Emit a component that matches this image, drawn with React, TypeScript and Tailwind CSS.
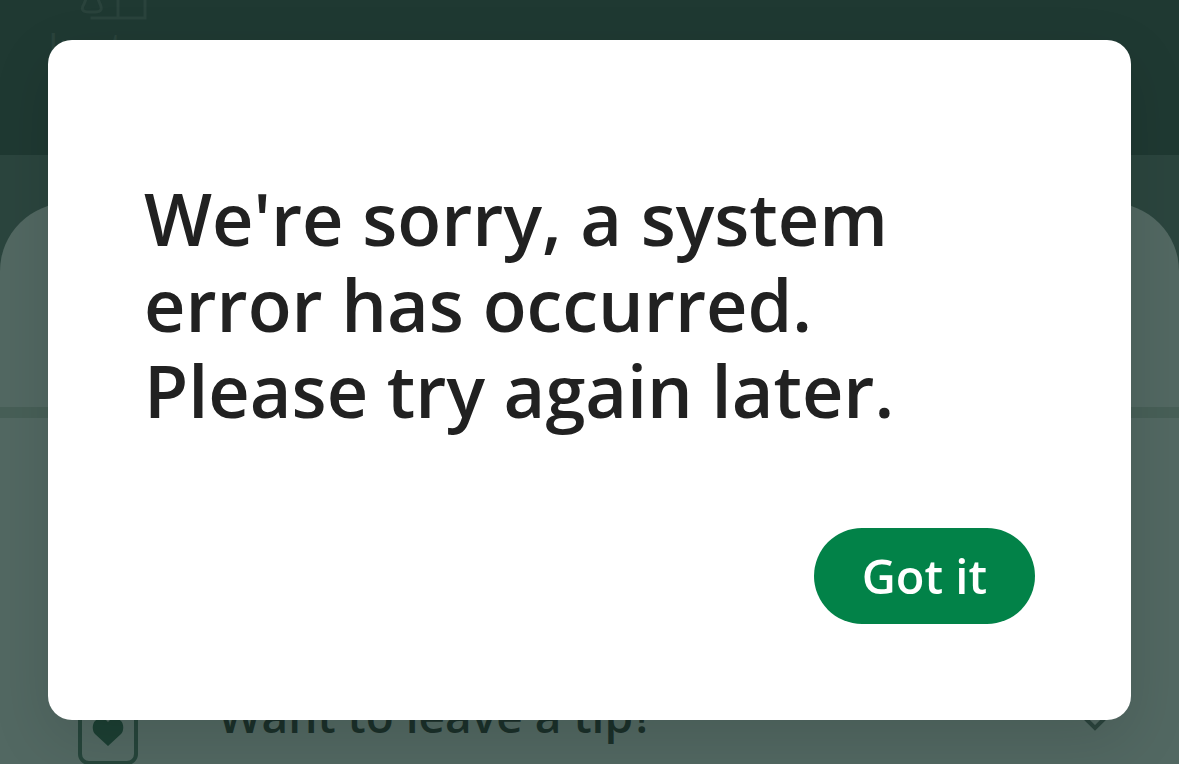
function StoreIcon() {
  return (
    <svg className="h-[60px] w-[68px]" viewBox="0 0 68 60" fill="none" stroke="currentColor" strokeWidth="3" strokeLinecap="square">
      <path d="M8 34 L4 44 Q-1 52 9 52 H15 Q24 52 20 44 L16 34 Z" />
      <path d="M12 58 H65 V12 M38 58 V12" />
    </svg>
  );
}

function TipIcon() {
  return (
    <svg className="h-[80px] w-[60px] shrink-0" viewBox="0 0 60 80" fill="none">
      <rect x="2" y="2" width="56" height="76" rx="9" stroke="#26453b" strokeWidth="4" />
      <path d="M30 61 L17 49 C14 46 14 39 17 36 C21 32 27 33 30 37 C33 33 39 32 43 36 C46 39 46 46 43 49 Z" fill="#1c3f33" />
    </svg>
  );
}

function OrderPage() {
  return (
    <div className="flex h-screen flex-col overflow-hidden bg-[#2b453e]">
      {/* Header with the order type */}
      <header className="h-[155px] shrink-0 overflow-hidden bg-[#1f3932] px-12 text-[#2a433c]">
        <div className="-mt-10 ml-8">
          <StoreIcon />
        </div>
        <p className="text-[38px] leading-[52px]">In store</p>
      </header>

      <main className="mt-12 flex-1 rounded-t-[68px] bg-[#526862]">
        <div className="box-content h-[204px] border-b-[11px] border-[#475f57]" />

        {/* Tip row */}
        <section className="flex items-center pt-[267px] pr-[72px] pl-[78px]">
          <TipIcon />
          <h2 className="ml-20 flex-1 pb-5 text-[46px] leading-[56px] font-semibold text-[#1b302a]">Want to leave a tip?</h2>
          <svg className="h-6 w-6 text-[#2b443d]" viewBox="0 0 24 24" fill="none" stroke="currentColor" strokeWidth="4">
            <path d="M2 5 L12 15 L22 5" />
          </svg>
        </section>
      </main>
    </div>
  );
}

function ErrorDialog() {
  return (
    <div className="fixed inset-0 px-12 pt-10">
      <div
        role="alertdialog"
        aria-modal="true"
        aria-labelledby="error-title"
        className="flex flex-col rounded-3xl bg-white px-24 pt-[135px] pb-24 shadow-[0_20px_60px_rgba(0,0,0,0.12)]"
      >
        <h1 id="error-title" className="max-w-[840px] text-[72px] leading-[86px] font-semibold text-[#212121]">
          We're sorry, a system error has occurred. Please try again later.
        </h1>
        <button type="button" className="mt-[95px] h-24 self-end rounded-full bg-[#028248] px-12 text-[47px] leading-[56px] font-semibold text-white">
          Got it
        </button>
      </div>
    </div>
  );
}

export default function App() {
  return (
    <div className="font-['Open_Sans',sans-serif]">
      <OrderPage />
      <ErrorDialog />
    </div>
  );
}
